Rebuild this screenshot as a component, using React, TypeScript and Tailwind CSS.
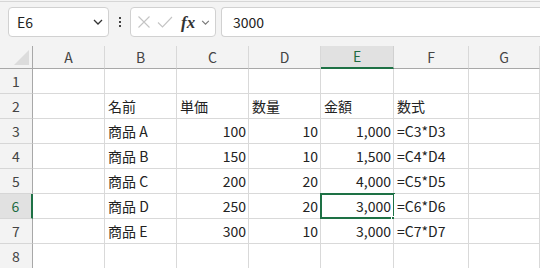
import React from 'react';

const cols = ['A', 'B', 'C', 'D', 'E', 'F', 'G'];

type Row = { n: number; cells: (string | { v: string; right: boolean })[] };

const R = (v: string) => ({ v, right: true });

const rows: Row[] = [
  { n: 1, cells: ['', '', '', '', '', '', ''] },
  { n: 2, cells: ['', '名前', '単価', '数量', '金額', '数式', ''] },
  { n: 3, cells: ['', '商品 A', R('100'), R('10'), R('1,000'), '=C3*D3', ''] },
  { n: 4, cells: ['', '商品 B', R('150'), R('10'), R('1,500'), '=C4*D4', ''] },
  { n: 5, cells: ['', '商品 C', R('200'), R('20'), R('4,000'), '=C5*D5', ''] },
  { n: 6, cells: ['', '商品 D', R('250'), R('20'), R('3,000'), '=C6*D6', ''] },
  { n: 7, cells: ['', '商品 E', R('300'), R('10'), R('3,000'), '=C7*D7', ''] },
  { n: 8, cells: ['', '', '', '', '', '', ''] },
];

const font = { fontFamily: '"Noto Sans CJK JP", "Noto Sans", sans-serif' };

function Chevron({ className }: { className?: string }) {
  return (
    <svg viewBox="0 0 10 6" className={className} fill="none" stroke="currentColor" strokeWidth="1.3">
      <path d="M1 1l4 4 4-4" />
    </svg>
  );
}

export default function App() {
  return (
    <div className="w-[540px] h-[268px] overflow-hidden bg-[#f3f3f3] text-[#222]" style={font}>
      {/* formula bar */}
      <div className="h-[45px] border-t border-[#d6d6d6] mt-px flex items-start pt-[5px]">
        <div className="ml-[8px] w-[101px] h-[30px] bg-white border border-[#d1d1d1] rounded-[4px] flex items-center pl-[8px] pr-[5px]">
          <span className="text-[14px] flex-1 leading-none">E6</span>
          <Chevron className="w-[10px] h-[6px] text-[#333]" />
        </div>
        <div className="w-[21px] h-[30px] flex flex-col items-center justify-center gap-[2px]">
          <span className="w-[2px] h-[2px] bg-[#444]" />
          <span className="w-[2px] h-[2px] bg-[#444]" />
          <span className="w-[2px] h-[2px] bg-[#444]" />
        </div>
        <div className="w-[86px] h-[30px] bg-white border border-[#d1d1d1] rounded-[4px] flex items-center pl-[6px] gap-[6px]">
          <svg viewBox="0 0 14 14" className="w-[14px] h-[14px]" fill="none" stroke="#c4c4c4" strokeWidth="1.1">
            <path d="M1.5 1.5l11 11M12.5 1.5l-11 11" />
          </svg>
          <svg viewBox="0 0 16 14" className="w-[16px] h-[14px]" fill="none" stroke="#c4c4c4" strokeWidth="1.1">
            <path d="M1 7.5l4.5 4.5L15 2" />
          </svg>
          <span className="text-[17px] italic font-bold leading-none text-[#333] ml-[2px]" style={{ fontFamily: '"Liberation Serif", serif' }}>fx</span>
          <Chevron className="w-[9px] h-[5px] text-[#777]" />
        </div>
        <div className="ml-[5px] flex-1 h-[30px] bg-white border border-[#d1d1d1] border-r-0 rounded-l-[4px] flex items-center pl-[11px]">
          <span className="text-[14px] leading-none">3000</span>
        </div>
      </div>

      {/* grid */}
      <div className="grid grid-cols-[33px_72px_72px_72px_72px_73px_75px_1fr] grid-rows-[23px_repeat(8,25px)] text-[14px]">
        {/* corner */}
        <div className="relative border-r border-b border-[#a8a8a8] bg-[#f3f3f3]">
          <svg viewBox="0 0 16 16" className="absolute right-[3px] bottom-[3px] w-[15px] h-[15px]">
            <path d="M16 0V16H0Z" fill="#dcdcdc" />
          </svg>
        </div>
        {cols.map((c) =>
          c === 'E' ? (
            <div key={c} className="bg-[#e1e1e1] border-r border-[#d0d0d0] border-b-2 border-b-[#1e7145] flex items-center justify-center text-[#1e6b41] pb-px">
              {c}
            </div>
          ) : (
            <div key={c} className="border-r border-[#d8d8d8] border-b border-b-[#a8a8a8] flex items-center justify-center text-[#444]">
              {c}
            </div>
          )
        )}
        {rows.map((r) => (
          <React.Fragment key={r.n}>
            {r.n === 6 ? (
              <div className="bg-[#e1e1e1] border-r-2 border-[#1e7145] border-b border-b-[#d6d6d6] flex items-center justify-center text-[#1e6b41]">
                {r.n}
              </div>
            ) : (
              <div className="border-r border-[#a8a8a8] border-b border-b-[#d6d6d6] flex items-center justify-center text-[#444]">
                {r.n}
              </div>
            )}
            {r.cells.map((cell, i) => {
              const right = typeof cell !== 'string';
              const v = typeof cell === 'string' ? cell : cell.v;
              const selected = r.n === 6 && i === 4;
              return (
                <div
                  key={i}
                  className={`relative bg-white border-r border-b border-[#d9d9d9] flex items-center whitespace-nowrap ${right ? 'justify-end pr-[2px]' : 'pl-[3px]'}`}
                >
                  {v}
                  {selected && (
                    <>
                      <div className="absolute -left-px -top-px right-[-2px] bottom-[-1px] border-2 border-[#1e7145]" />
                      <div className="absolute right-[-4px] bottom-[-4px] w-[6px] h-[6px] bg-[#1e7145] border border-white" />
                    </>
                  )}
                </div>
              );
            })}
          </React.Fragment>
        ))}
      </div>
    </div>
  );
}
